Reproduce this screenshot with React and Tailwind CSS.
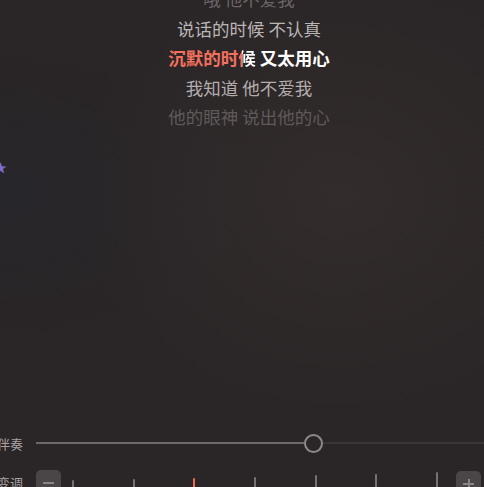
import React from "react";

const lines = [
  { text: "哦 他不爱我", className: "text-[#6b6566]" },
  { text: "说话的时候 不认真", className: "text-[#bab5b5]" },
  null,
  { text: "我知道 他不爱我", className: "text-[#b3aeae]" },
  { text: "他的眼神 说出他的心", className: "text-[#5f595a]" },
];

const ticks = [
  "h-[16px] bg-[#777272]",
  "h-[17px] bg-[#777272]",
  "h-[18px] bg-[#f06a52]",
  "h-[19px] bg-[#777272]",
  "h-[21px] bg-[#777272]",
  "h-[22px] bg-[#777272]",
  "h-[24px] bg-[#777272]",
];

const App = () => {
  return (
    <div
      className="relative flex flex-col w-[484px] h-[487px] overflow-hidden bg-[#2a2526] bg-[radial-gradient(ellipse_at_70%_40%,#322c2c_0%,transparent_55%),radial-gradient(ellipse_at_0%_40%,#27262a_0%,transparent_40%)]"
      style={{ fontFamily: '"Noto Sans CJK SC", "Noto Sans", sans-serif' }}
    >
      <div className="flex flex-col items-center mt-[-16px] pl-[14px] text-[17.5px] leading-[29.5px] shrink-0">
        {lines.map((line, i) =>
          line ? (
            <div key={i} className={line.className}>
              {line.text}
            </div>
          ) : (
            <div key={i} className="font-bold text-white">
              <span className="text-[#f3705e]">沉默的时</span>
              <span className="bg-[linear-gradient(90deg,#f3705e_0%,#f3705e_24%,#ffffff_24%)] bg-clip-text text-transparent">
                候
              </span>
              {" 又太用心"}
            </div>
          )
        )}
      </div>

      <span className="absolute left-[-6px] top-[160px] text-[13px] leading-none text-[#7c6bd6]">
        ★
      </span>

      <div className="flex-1" />

      <div className="flex items-center h-[20px] shrink-0">
        <span className="ml-[-3px] w-[26px] text-[13px] leading-none text-[#a8a2a2]">
          伴奏
        </span>
        <div className="ml-[13px] flex-1 flex items-center">
          <div className="w-[268px] h-[2px] bg-[#6e6969]" />
          <div className="w-[19px] h-[19px] rounded-full border-2 border-[#8e8989] shrink-0" />
          <div className="flex-1 h-[2px] bg-[#3a3435]" />
        </div>
      </div>

      <div className="flex items-start h-[26px] mt-[17px] mb-[-9px] shrink-0">
        <span className="ml-[-3px] w-[26px] mt-[6px] text-[13px] leading-none text-[#a8a2a2]">
          变调
        </span>
        <div className="ml-[13px] w-[25px] h-[26px] rounded-[5px] bg-[#4a4546] flex items-center justify-center shrink-0">
          <div className="w-[11px] h-[2px] bg-[#8a8485]" />
        </div>
        <div className="ml-[11px] w-[366px] h-[26px] flex items-end justify-between">
          {ticks.map((t, i) => (
            <div key={i} className={`w-[2px] rounded-t-[1px] ${t}`} />
          ))}
        </div>
        <div className="ml-[18px] mt-[1px] w-[25px] h-[26px] rounded-[5px] bg-[#4a4546] flex items-center justify-center shrink-0">
          <div className="relative w-[11px] h-[11px]">
            <div className="absolute left-0 top-[4.5px] w-[11px] h-[2px] bg-[#8a8485]" />
            <div className="absolute top-0 left-[4.5px] w-[2px] h-[11px] bg-[#8a8485]" />
          </div>
        </div>
      </div>
    </div>
  );
};

export default App;
